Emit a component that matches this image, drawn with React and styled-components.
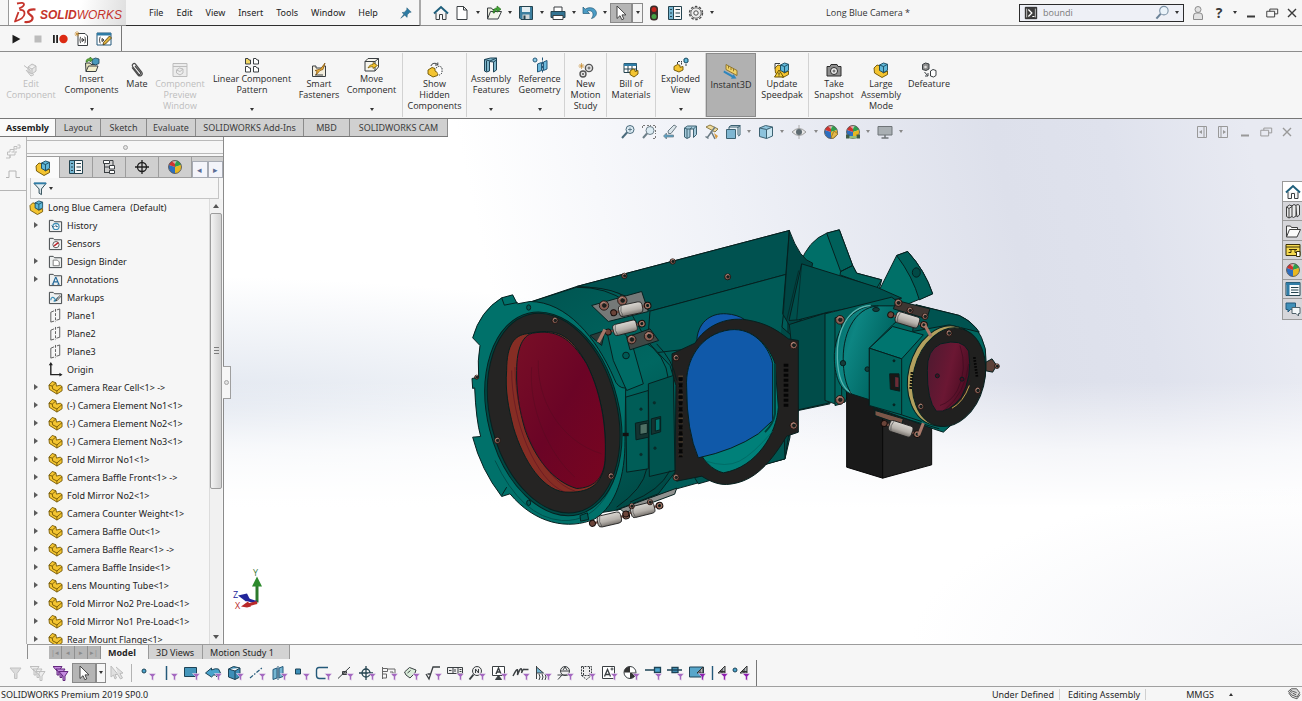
import React, { useState } from 'react';
import styled, { createGlobalStyle, css } from 'styled-components';

const GlobalStyle = createGlobalStyle`
  * {
    box-sizing: border-box;
  }

  body {
    margin: 0;
    background: #f6f6f6;
    color: #262626;
    font-family: "Open Sans", "Noto Sans", sans-serif;
    font-size: 9px;
    line-height: 11px;
  }

  button, input {
    margin: 0;
    padding: 0;
    border: none;
    background: none;
    color: inherit;
    font: inherit;
  }

  ul {
    margin: 0;
    padding: 0;
    list-style: none;
  }

  svg {
    display: block;
    flex: none;
  }
`;

const listFont = css`
  font-family: "Noto Sans", "Open Sans", sans-serif;
  font-size: 9px;
`;

/* ---------- icons ---------- */

const K = '#3a3f42';
const B = '#3b8db5';
const Y = '#f3c431';

const Part = () => (
  <g stroke="#6d5200" strokeWidth="0.9" strokeLinejoin="round">
    <path d="M1 5.5 4.5 1.5 8.5 3l.5 3.500 4-1L15 7v4.500L9.500 15 1.500 10z" fill={Y} />
    <path d="m1 5.500 3.500 1L8.500 3M4.500 6.500l.5 3 4.500 2.200L15 7M9.500 11.500V15" fill="none" />
  </g>
);

const Assembly = () => (
  <g strokeLinejoin="round">
    <path d="M1 6 4 3l3 .8V8l3.500 3L14.500 9V12.500L9 15.500 1.500 11z" fill={Y} stroke="#6d5200" strokeWidth="0.9" />
    <path d="m6.500 3 4-2 4 1.300v6L10.500 10.500 6.500 8.500z" fill="#5fb7d8" stroke="#17485e" strokeWidth="0.9" />
    <path d="m6.500 3 4 1.500 4-2.200M10.500 4.500v6" fill="none" stroke="#17485e" strokeWidth="0.9" />
  </g>
);

const Folder = () => (
  <path d="M1.500 14.500v-12h4l1.500 1.500h7.500v10.500z" fill="#eef0f0" stroke={K} />
);

const Ball = () => (
  <g>
    <path d="M8 8V1.500a6.500 6.500 0 0 1 6 4.500z" fill="#2f9e4c" />
    <path d="M8 8 14 6A6.500 6.500 0 0 1 8 14.500z" fill="#e8b820" />
    <path d="M8 8v6.500A6.500 6.500 0 0 1 2 6z" fill="#2d6fc0" />
    <path d="M8 8 2 6A6.500 6.500 0 0 1 8 1.500z" fill="#d1342f" />
    <path d="M5 2.500a6.500 6.500 0 0 1 5-.7L8 5z" fill="#f3f3f3" opacity="0.6" />
    <circle cx="8" cy="8" r="6.5" fill="none" stroke="#4b4b4b" strokeWidth="0.8" />
  </g>
);

const icons = {
  part: <Part />,
  assembly: <Assembly />,
  home: (
    <g>
      <path d="M3 8v6.500h3.500V9.500h3v5H13V8" fill="#f4f4f4" stroke={K} />
      <path d="M1 8.500 8 2l7 6.500" fill="none" stroke="#1f5f7c" strokeWidth="2" />
    </g>
  ),
  page: <path d="M3 1.500h6.500L13 5v9.500H3zM9.500 1.500V5H13" fill="#fff" stroke={K} />,
  open: (
    <g>
      <path d="M1.500 14V3h4l1 1.500h5V7" fill="#e8eadf" stroke={K} />
      <path d="m1.500 14 3-7.500h11L12 14z" fill="#f4f5ec" stroke={K} />
      <path d="M7 8c0-4 2-5 4-5V1l4 3.200-4 3V5C9.500 5 8.500 6 8.500 8z" fill="#44a538" stroke="#216518" strokeWidth="0.6" />
    </g>
  ),
  save: (
    <g>
      <path d="M1.500 1.500h13v13H3L1.500 13z" fill="#3d7f9f" stroke="#24434f" />
      <path d="M4 2h8v5H4z" fill="#e4eef2" />
      <path d="M4.500 9.500h7V14h-7z" fill="#d0d6d8" />
      <path d="M5.500 10.500h2V14h-2z" fill="#24434f" />
    </g>
  ),
  print: (
    <g>
      <path d="M4 7V2h8v5" fill="#fff" stroke={K} />
      <path d="M1 6.500h14v6H1z" fill="#337493" stroke="#24434f" />
      <path d="M3 10.500h10v4H3z" fill="#fff" stroke={K} />
    </g>
  ),
  undo: (
    <path d="M1 2v6.500h6.500L5.300 6.300C8 5 11 6 11 9.500c0 1.500-.5 2.500-1.500 4 4-1 5.500-4 4.700-6.700C13 2.800 7.500 1.300 3.200 4.200z" fill="#4b9cc5" stroke="#245a78" strokeWidth="0.7" />
  ),
  arrow: (
    <path d="M4 1v12.500l3-2.800 1.800 4 2-.8-1.800-4H13z" fill="#fff" stroke="#444" />
  ),
  light: (
    <g>
      <rect x="4" y="0.5" width="8" height="15" rx="3.5" fill="#3a2c28" />
      <circle cx="8" cy="4.500" r="2.500" fill="#c4261d" />
      <circle cx="8" cy="11.500" r="2.500" fill="#46a344" />
    </g>
  ),
  list: (
    <g>
      <path d="M1.500 1.500h13v13h-13z" fill="#f8f8f8" stroke="#24434f" />
      <path d="M2 2h4.500v12H2z" fill="#74b5d1" />
      <path d="M6.500 2v12M3 4.500h2M3 8h2M3 11.500h2M8.500 4.500h4.500M8.500 8h4.500M8.500 11.500h4.500" stroke="#24434f" />
    </g>
  ),
  gear: (
    <g fill="none" stroke="#4b4b4b">
      <circle cx="8" cy="8" r="6.500" strokeWidth="1.400" strokeDasharray="2.5 1.6" />
      <circle cx="8" cy="8" r="5.200" fill="#ececec" strokeWidth="0.8" />
      <circle cx="8" cy="8" r="2.200" fill="#fafafa" />
    </g>
  ),
  pin: (
    <g fill="#2d7ba3" stroke="#1d526e" strokeWidth="0.5">
      <path d="m9 2 5 5-2 .5-2.500 2.500-.2 3L3.500 7.500 6.300 7 8.800 4.300z" />
      <path d="M5.500 9.500 2 14l4.500-3.500z" />
    </g>
  ),
  play: <path d="M4 3v10l9-5z" fill="#1d1d1d" />,
  stop: <path d="M4 4h8v8H4z" fill="#bcbcbc" />,
  record: (
    <g>
      <path d="M1 4h1.800v8H1zM4.200 4H6v8H4.200z" fill="#222" />
      <circle cx="11.500" cy="8" r="4.200" fill="#dc2a12" />
    </g>
  ),
  macroNew: (
    <g>
      <path d="M4 2.500h7l2.500 2.500v9.500H4z" fill="#fff" stroke={K} />
      <path d="M7 6c-1.500 0 0 2.500-1.500 3C7 9.500 5.500 12 7 12M10.500 6c1.500 0 0 2.500 1.500 3-1.500.5 0 3-1.500 3M8 7.500v3L10.300 9z" fill="none" stroke="#222" strokeWidth="0.9" />
      <path d="M3 0v5.500M.5 3h5M1.200 1.200l3.600 3.600M4.800 1.200 1.200 4.800" stroke="#c78b2d" strokeWidth="0.7" />
    </g>
  ),
  macroEdit: (
    <g>
      <path d="M1 2h14v12H1z" fill="#fff" stroke="#24597a" />
      <path d="M1 2h14v2.500H1z" fill="#2e7ba5" />
      <path d="M4.500 6c-1.500 0 0 2.500-1.500 3 1.500.5 0 3 1.500 3M6 7.500v3L8 9z" fill="none" stroke="#222" strokeWidth="0.9" />
      <path d="m13.500 5 2 2-6 6-2.500.8.6-2.500z" fill="#e0b33c" stroke="#49350a" strokeWidth="0.8" />
    </g>
  ),
  editGrey: (
    <g fill="#e7e7e7" stroke="#bdbdbd">
      <path d="m5 5 4-3 4 2v5l-4 3-4-2zM5 5l4 2 4-3M9 7v5" />
      <path d="M1 3.500 7 8v3M3 8l5 6 3-1.500" fill="none" />
    </g>
  ),
  insert: (
    <g>
      <path d="M2 14.500 1.500 6H6l1 1.500h6" fill="#e9e6bf" stroke={K} />
      <path d="m2 14.500 2.500-5.500H14l-2 5.500z" fill="#f3efca" stroke={K} />
      <path d="m8 2.500 3.500-1.500 3.500 1v4.500L11.500 8 8 6.500z" fill="#4a98bb" stroke="#1d4356" strokeWidth="0.8" />
      <path d="M2 5c0-3 2-3.500 4-3.500V0l3 2.500L6 5V3.500C4.500 3.500 3.800 4 3.500 5z" fill="#63ad3c" stroke="#2d6b19" strokeWidth="0.6" />
    </g>
  ),
  clip: (
    <path d="m3 5.500 6 7.500c2 2.300 5.500-.2 3.700-2.800L6.500 2.200C5 .5 2.300 2.500 3.600 4.500l6 7.500c1 1.200 2.700 0 1.800-1.300L6 4" fill="none" stroke="#4a4a4a" strokeWidth="1.200" />
  ),
  previewGrey: (
    <g fill="#ececec" stroke="#bdbdbd">
      <path d="M1 1.500h14v13H1zM1 4.500h14" />
      <path d="m4.500 8 3-2 3.500 1v4l-3 2-3.500-2zM4.500 8 8 9.500 11 7" />
    </g>
  ),
  pattern: (
    <g fill="#fff" stroke={K}>
      <path d="M1.500 1.500H4l1 1.500h1.500v4h-5z" fill="#f2d764" />
      <path d="M9.500 1.500H12L13 3h1.500v4h-5zM1.500 9.500H4L5 11h1.500v4h-5zM9.500 9.500H12L13 11h1.500v4h-5z" />
    </g>
  ),
  fasteners: (
    <g>
      <path d="M1.500 4H5v2h7V4h2.500v10.500h-13z" fill="#f4efdf" stroke={K} />
      <path d="M4 8.500 9.500 7 14 1l-2 6.500-3 1-4 4.500 1-4z" fill="#edb23a" stroke="#7d4c06" strokeWidth="0.7" />
      <path d="M4 13h8" stroke={K} />
    </g>
  ),
  move: (
    <g>
      <path d="M1 4.500 4 1.500h10.500V10l-3.500 4H1z" fill="#f6f5ee" stroke={K} />
      <path d="M1 4.500h10l3.500-3M11 4.500V14" fill="none" stroke={K} />
      <path d="M4 11c1-2.500 3-3.500 5-3.500v-2l4.500 3L9 11.500V9.800C7.500 9.500 6 10 4 11z" fill={Y} stroke="#6d5200" strokeWidth="0.7" />
    </g>
  ),
  hidden: (
    <g>
      <path d="M1 8 5 5.500l3 1V9l3 2-.5 2.500L6 15l-5-3z" fill={Y} stroke="#6d5200" strokeWidth="0.9" />
      <path d="m9 6 3-2 3 1.500V11l-2.500 2L11 12" fill="#fff" stroke={K} strokeDasharray="1.5 1" />
      <path d="M4 4c.5-3 5-3.500 6.500-1.500M10.800.5V3H8" fill="none" stroke={K} />
    </g>
  ),
  features: (
    <g stroke="#1d4356">
      <path d="m1.500 2.500 6-1.500h6v12l-3 2V5l-4-.5V14l-3 1-2-1z" fill="#7fb6cb" />
      <path d="M1.500 2.500 7 4l6.500-3M10.500 5l3-2M3.500 4v10.500" fill="none" />
    </g>
  ),
  geometry: (
    <g>
      <circle cx="3" cy="3" r="2" fill="#8fcbe4" stroke="#24597a" />
      <path d="m5.500 7 4-1.500v8L5.500 15zM11.500 5 15 3.500V12l-3.500 1.500z" fill="#6db9dc" stroke="#24597a" />
      <path d="M10.500.5v15" stroke="#24597a" strokeDasharray="3 1" />
    </g>
  ),
  motion: (
    <g fill="#e9e9e9" stroke="#555">
      <circle cx="11" cy="6" r="3.600" strokeWidth="1.400" />
      <circle cx="11" cy="6" r="1" />
      <circle cx="5" cy="12" r="3" strokeWidth="1.400" />
      <circle cx="5" cy="12" r="0.7" />
      <path d="M3.500 1v6M.5 4h6M1.500 2l4 4M5.500 2l-4 4" stroke="#c78b2d" strokeWidth="0.7" />
    </g>
  ),
  bom: (
    <g>
      <path d="M1 1.500h12.500v9H1z" fill="#fff" stroke="#24434f" />
      <path d="M1 1.500h12.500V4H1z" fill="#2f7da7" />
      <path d="M1 7h12.500M5 4v6.500M9 4v6.500" stroke="#24434f" />
      <path d="m7 9 3-2 2 .8v1.700l3-1V12L11 15l-4-2.500z" fill={Y} stroke="#6d5200" strokeWidth="0.9" />
    </g>
  ),
  exploded: (
    <g>
      <path d="m1 9.500 3.500-2 2.500.8v2l3-.8V13L6 15l-5-2z" fill={Y} stroke="#6d5200" strokeWidth="0.9" />
      <path d="m11 2 2-1 2 1v3l-2 1-2-1z" fill="#5fb7d8" stroke="#17485e" />
      <path d="M13 7v3M8.500 5.500v2M4.500 7V4.500H9" fill="none" stroke={K} strokeDasharray="2 1" />
    </g>
  ),
  instant: (
    <g>
      <path d="m3 1.500 11 6v5L3 6.500z" fill="#f0d36a" stroke="#806519" strokeWidth="0.8" />
      <path d="M5.500 3v2.500M8 4.500V7M10.500 5.800v2.500" stroke="#806519" strokeWidth="0.8" />
      <path d="m1 7.500 9 5 .5-1.500 3 4.500-5.500.3.800-1.500-8.300-4.800z" fill="#2f86bd" />
    </g>
  ),
  speedpak: (
    <g>
      <Assembly />
      <path d="M1 1.500h5M1 1.500v5" stroke={K} fill="none" />
      <path d="m5 8 4.500 7h-9z" fill="#f7d23a" stroke="#6d5200" />
      <path d="M5 10.500v2.300M5 13.500v.8" stroke="#222" />
    </g>
  ),
  camera: (
    <g>
      <path d="M1 4.500h3l1-2h6l1 2h3V14H1z" fill="#8e8e8e" stroke="#2c2c2c" />
      <circle cx="8" cy="9" r="3.500" fill="#f1f1f1" stroke="#2c2c2c" />
      <circle cx="8" cy="9" r="1.500" fill="#777" />
    </g>
  ),
  defeature: (
    <g>
      <path d="m1.500 2.500 3-1.500L8 2v5L5 8.500l-3.500-1z" fill="#8d8d8d" stroke={K} />
      <circle cx="4.500" cy="5" r="1.300" fill="#ddd" />
      <path d="m9.500 9 2.500-1.500 3 1v5L12.500 15l-3-1z" fill="#fff" stroke={K} />
      <path d="m3.500 10 3 3.500M7 11v3H4" fill="none" stroke={K} />
    </g>
  ),
  zoomFit: (
    <g>
      <circle cx="10" cy="5.500" r="4" fill="#dcebf3" stroke="#4b6b7c" />
      <path d="M7 8.500 2 14" stroke="#4b6b7c" strokeWidth="2" />
      <path d="M8 5.500h4M10 3.500v4" stroke="#4b6b7c" strokeWidth="0.8" />
    </g>
  ),
  zoomArea: (
    <g>
      <path d="M1.500 4V1.500H4M12 1.500h2.500V4M14.500 12v2.500H12M6 1.500h4M14.500 6v4" fill="none" stroke="#777" strokeDasharray="2 1" />
      <circle cx="9" cy="6.500" r="4" fill="#dcebf3" stroke="#6d7f89" />
      <path d="m6 9.500-4 4.500" stroke="#6d7f89" strokeWidth="2" />
    </g>
  ),
  prevView: (
    <g stroke="#6b7b84" fill="#dbe5ea">
      <path d="m12 1 2.500 1.500L9 9.500H6.500L6 7z" />
      <path d="m1.500 12 3-3v2h7v2h-7v2z" fill="#5ba1c5" strokeWidth="0.7" />
    </g>
  ),
  section: (
    <g stroke="#3d6272">
      <path d="m1.500 4 3-2h9v8.500l-3 3V5H7v8l-3 1.500-2.500-1.500z" fill="#a4c9da" />
      <path d="M1.500 4 4 5h3l2-1.500M10.500 5l3-3M4 5v9" fill="none" />
    </g>
  ),
  dynView: (
    <g>
      <path d="m2 3 4-2 8 4-3 3z" fill="#f0dc9c" stroke="#8d7b45" />
      <path d="M3 14 11 3M7 7l4 8M1.500 12.500l3 2" stroke="#6b7b84" strokeWidth="1.500" />
      <path d="m10 9 4 3-2 3z" fill="#d99a3d" />
    </g>
  ),
  orient: (
    <g stroke="#3d6272">
      <path d="m4 3 2-1.500h9l-2 2M4 3h9v8M13 3.500l2-2V11l-2 1" fill="#e9f1f5" />
      <path d="M1.500 5.500h9v9h-9z" fill="#7fb6d1" />
      <path d="M4 5.500V3" />
    </g>
  ),
  cube: (
    <g stroke="#3d6272" strokeLinejoin="round">
      <path d="m1.500 4 6-2.500 7 1.500v9l-6 2.500-7-2z" fill="#8dc3dc" />
      <path d="m9 6 5-2.200v7.700L9 13.700z" fill="#c9e5f0" stroke="none" />
      <path d="m1.500 4 7 1.500 6-2.500M8.500 5.500v9" fill="none" />
    </g>
  ),
  eye: (
    <g>
      <path d="M1 8q7-7 14 0-7 7-14 0z" fill="#e6e6e6" stroke="#9b9b9b" />
      <circle cx="8" cy="8" r="3" fill="#5d6a70" />
      <path d="M8 1v3M8 12v3" stroke="#aaa" />
    </g>
  ),
  appearance: (
    <g>
      <Ball />
      <path d="m11 7 4 3-5 4.500-2-1z" fill="#e2b84c" stroke="#85662a" strokeWidth="0.7" />
    </g>
  ),
  scene: (
    <g>
      <Ball />
      <path d="M1 10.500h3.500v4H1zM11.500 10.500H15v4h-3.500z" fill="#3f5c48" />
      <path d="M4.500 12h7v2.500h-7z" fill="#97bf7a" />
    </g>
  ),
  monitor: (
    <g stroke="#6f7478">
      <path d="M1 2.500h14V11H1z" fill="#a9afb3" />
      <path d="M8 11v2.500M4.500 14h7" strokeWidth="1.500" />
    </g>
  ),
  ball: <Ball />,
  tree: (
    <g fill="#fff" stroke={K}>
      <path d="M3.500 2v12M3.500 8h5M3.500 13.500h5" fill="none" />
      <path d="M2.500 1.500h6v3h-6zM8.500 6.500h5V10h-5zM8.500 11.500h5v3h-5z" />
      <path d="M9 1.500h3V6" fill="none" />
    </g>
  ),
  target: (
    <g fill="none" stroke="#1f1f1f" strokeWidth="1.300">
      <circle cx="8" cy="8" r="4.500" />
      <path d="M8 1v14M1 8h14" />
    </g>
  ),
  history: (
    <g>
      <Folder />
      <circle cx="8.500" cy="9" r="3.300" fill="#fff" stroke={B} strokeWidth="1.200" />
      <path d="M8.500 7v2.200h2M4 8l1.500 2L7 8.500" fill="none" stroke="#24597a" />
    </g>
  ),
  sensors: (
    <g>
      <Folder />
      <circle cx="8.500" cy="9.200" r="3.300" fill="#fff" stroke="#555" />
      <path d="M6.500 10.500 11 7" stroke="#c0272d" strokeWidth="1.600" />
    </g>
  ),
  binder: (
    <g>
      <Folder />
      <path d="M5.500 6.500H10l2 2v4H5.500z" fill="#fff" stroke="#777" />
    </g>
  ),
  annotations: (
    <g>
      <Folder />
      <path d="m5 13 3-7h.6l3 7M6 10.500h4.500M4 13h2.500M10 13h2.500" fill="none" stroke="#24699a" strokeWidth="1.200" />
    </g>
  ),
  markups: (
    <g>
      <Folder />
      <path d="M3 11c0-3 2-4 4-2s-2 3 0 3 2-4 4-4" fill="none" stroke={B} strokeWidth="1.200" />
      <path d="m12.500 6 1 1-3.500 4-1.500.5.5-1.500z" fill="#fff" stroke="#333" strokeWidth="0.9" />
    </g>
  ),
  plane: (
    <g fill="none" stroke="#5a5a5a">
      <path d="M6.500 3 3 4.500V15l3.500-1M9.500 2l3-1v11L9 13" />
      <path d="M8 1v14" strokeDasharray="3 1.5" />
    </g>
  ),
  origin: (
    <g stroke="#222" fill="#222">
      <path d="M3 3v10.500h10" fill="none" strokeWidth="1.500" />
      <path d="M3 0 .8 3.500h4.400zM15.500 13.500l-3.300-2v4z" stroke="none" />
    </g>
  ),
  funnel: (
    <g>
      <path d="M1 2.500h13L9 8.500v6L6.500 13V8.500z" fill="#e4eef2" stroke="#24434f" />
      <path d="M1 1.500h13v2H1z" fill="#2f7da7" />
    </g>
  ),
  library: (
    <g fill="#e9e9e9" stroke="#3d3d3d">
      <path d="M10.500 2.500 13 1.500l1.500 1v9.500L12 14z" />
      <path d="m6 3.500 3-2 2 1V13l-2.500 1.500L6 13z" />
      <path d="m1.500 4 3-2L7 3v10.500L4 15l-2.500-1.500zM1.500 4 4 5.500V15M4 5.500 7 3.500" />
    </g>
  ),
  folder: (
    <g stroke="#3d3d3d" fill="#fafafa">
      <path d="M1.500 14V3h4l1 1.500h6V7" />
      <path d="m1.500 14 3-7.500h11L12 14z" />
    </g>
  ),
  palette: (
    <g>
      <path d="M1 2.500h14v11H1z" fill="#f5d94e" stroke="#3d3208" />
      <path d="M1 5h14M4 7.500h8M6 7.500v3H3.500M10 7.500v3h2.500" stroke="#3d3208" fill="none" />
      <path d="M11.500 9.500H15v5h-3.500z" fill="#fff" stroke="#3d3208" />
    </g>
  ),
  props: (
    <g>
      <path d="M1 1.500h14v13H1z" fill="#f6fafc" stroke="#24434f" />
      <path d="M1 1.500h14V4H1zM1.500 4h3v10.500h-3z" fill="#2f7da7" />
      <path d="M6 6.500h7.500M6 9h7.500M6 11.500h7.500" stroke="#24434f" />
    </g>
  ),
  forum: (
    <g>
      <path d="M1 2h9.500v6.500h-5L3 11V8.500H1z" fill="#3f8fb8" stroke="#24597a" />
      <path d="M7 6.500h8v6h-1.500V15L11 12.500H7z" fill="#f3f7f9" stroke="#50626b" />
    </g>
  ),
  tags: (
    <g fill="#dcdcdc" stroke="#4a4a4a">
      <path d="M1.500 5 5 2h6l3.500 4.500-3 5L5 9z" />
      <path d="M2 7l3.500 4.500 6 2L15 8.500" fill="none" />
      <circle cx="5" cy="5" r="1" fill="#fff" />
      <path d="m7 5 4 1.500M6.500 7l4 2" />
    </g>
  ),
  railA: (
    <path d="M1 14h4v-3H2.500V8H5V5.500h4V8H6.500M9 5.500v-3h3V5H9M12.500 1H15v3h-2M5 14v-3h5V8h2" fill="none" stroke="#bfbfbf" />
  ),
  railB: <path d="M1 11.500h3V5h7v6.500h4" fill="none" stroke="#b4b4b4" />,
  user: (
    <g fill="#e2e2e2" stroke="#8d8d8d">
      <circle cx="8" cy="4.500" r="3" />
      <path d="M3.500 14.500V11q0-3 2.500-3h4q2.500 0 2.500 3v3.500z" />
    </g>
  ),
  minimize: <path d="M4 10.500h8v2H4z" fill="currentColor" />,
  restore: (
    <g fill="none" stroke="currentColor" strokeWidth="1.100">
      <path d="M5.500 6V3.500h9V9H11" />
      <path d="M2 6h9v6.500H2z" />
    </g>
  ),
  close: <path d="m4 4 8 8M12 4l-8 8" stroke="currentColor" strokeWidth="1.400" />,
  dockLeft: (
    <g fill="none" stroke="currentColor">
      <path d="M3.500 2.500h9v11h-9zM10 2.500v11" />
      <path d="M8 6v4L5 8z" fill="currentColor" stroke="none" />
    </g>
  ),
  dockRight: (
    <g fill="none" stroke="currentColor">
      <path d="M3.500 2.500h9v11h-9zM6 2.500v11" />
      <path d="M8 6v4l3-2z" fill="currentColor" stroke="none" />
    </g>
  ),
  terminal: (
    <g>
      <path d="M1.500 1.500h13v13h-13z" fill="#3c3c3c" stroke="#1f1f1f" />
      <path d="M3 3v10M13 3v10" stroke="#ccc" />
      <path d="m5 4 4 4-4 4M9.500 12H12" fill="none" stroke="#fff" strokeWidth="1.400" />
    </g>
  ),
  search: (
    <g fill="none">
      <circle cx="9.500" cy="6" r="4.500" fill="#eaf3fa" stroke="#7d93a6" strokeWidth="1.200" />
      <path d="m6 9.500-4.500 5" stroke="#6a8298" strokeWidth="2.200" />
    </g>
  ),
  funnelGrey: <path d="M2 3h11L9 8.500v5H6.500v-5z" fill="#dcdcdc" stroke="#c2c2c2" />,
  funnelsGrey: (
    <g fill="#ededed" stroke="#bebebe">
      <path d="M0 1.500h9L6 6v4H4V6zM3 4h9L9 8.500v4H7v-4zM6 6.500h9L12 11v4.500h-2V11z" />
    </g>
  ),
  funnelsPurple: (
    <g fill="#c58be0" stroke="#64287e">
      <path d="M0 1.500h9L6 6v4H4V6z" />
      <path d="M3 4h9L9 8.500v4H7v-4z" />
      <path d="M6 6.500h9L12 11v4.500h-2V11z" />
    </g>
  ),
  selectGrey: (
    <g fill="#e0e0e0" stroke="#bdbdbd">
      <path d="M2 1v11l2.500-2L6 14l1.500-1L6 9.500h3z" />
      <path d="m7 2 7 6-3 .5 2.500 4.500-2 1L9 10" />
    </g>
  ),
};

const Icon = ({ name, size = 16 }) => (
  <svg width={size} height={size} viewBox="0 0 16 16" aria-hidden="true">
    {icons[name]}
  </svg>
);

// Selection filter glyphs, drawn on a 20x16 grid with the small funnel in the corner
const filterGlyphs = [
  ['Filter Vertices', <circle cx="6" cy="6" r="2" fill="#4aa3cc" stroke="#1d4356" />],
  ['Filter Edges', <path d="M6.500 1v14" stroke="#24597a" strokeWidth="1.500" />],
  ['Filter Faces', <path d="M2.500 2.500h12v9h-12z" fill="#4596bb" stroke="#1d4356" />],
  ['Filter Surface Bodies', <path d="m1.500 8 6-5v2q4-2 7-1l2 4-4 4v-2q-3-1-5 2z" fill="#4aa3cc" stroke="#1d4356" />],
  ['Filter Solid Bodies', <path d="m2.500 4 5-2.500L14 3v9l-5 2.500L2.500 12zM2.500 4 9 6l5-3M9 6v8.500" fill="#3d8fb8" stroke="#1d4356" />],
  ['Filter Axes', <path d="M2 13 15 2" stroke="#24597a" strokeWidth="1.200" strokeDasharray="4 1.5 1.5 1.5" />],
  ['Filter Planes', <path d="m3 4.500 4-1.500v10l-4 1.500zM9 3l4-1.500v10L9 13zM8 1v14" fill="#74b5d1" stroke="#24597a" />],
  ['Filter Sketch Points', <path d="M3.500 4h5v5h-5z" fill="#3d8fb8" stroke="#1d4356" />],
  ['Filter Sketch Segments', <path d="M14 2.500H5q-2.500 0-2.500 3v5q0 3 3 3h6" fill="none" stroke="#24597a" strokeWidth="1.400" />],
  ['Filter Midpoints', <path d="M2 13.500 14 2M6.500 6.500h4v3h-4z" fill="#888" stroke={K} />],
  ['Filter Center Marks', <g fill="none" stroke="#24434f" strokeWidth="1.300"><circle cx="8" cy="8" r="4" /><path d="M8 1v14M1 8h14" /></g>],
  ['Filter Centerlines', <path d="M2.500 2v12M2.500 3.500h5v3h-5M2.500 9h4v4h-4M8 4h7v7M10 7h3v4" fill="none" stroke="#666" />],
  ['Filter Dimensions', <path d="m2.500 7 5-4.500L14 5l-1 3-5 5-4-3zM5.500 8l3-2.500" fill="#d9ecd9" stroke={K} />],
  ['Filter Surface Finish', <path d="m2 9 3 5L9 2h7M3.500 9H7" fill="none" stroke={K} strokeWidth="1.300" />],
  ['Filter Geometric Tolerances', <path d="M1.500 2.500h15v6h-15zM7 2.500v6M12 2.500v6M3 5.500h2.500M9 4v3M13.500 4.500h2M13.500 6.500h2" fill="#eee" stroke={K} />],
  ['Filter Notes', <g fill="none" stroke={K}><circle cx="9" cy="6" r="4.500" fill="#eee" /><path d="m5.500 9.500-4 5" strokeWidth="2" /><path d="M7.500 8V4l3 4V4" /></g>],
  ['Filter Datum Features', <g fill="none" stroke={K}><path d="M2.500 1.500h12v9h-12z" fill="#fff" /><path d="m6 9 2.500-6L11 9M7 7h3" strokeWidth="1.400" /><path d="m8.500 10.500-3 4h6z" fill={K} /></g>],
  ['Filter Weld Symbols', <path d="M1 11q4-8 4.500-6t0 5q3-8 4-6t0 4q2-5 3-3.500h4" fill="none" stroke={K} strokeWidth="1.400" />],
  ['Filter Weld Beads', <g fill="none" stroke={K}><path d="M2.500 1v13M2.500 2l7 6h-7" fill="#74b5d1" /><path d="M5 9q2 3 0 6M8 9q2 3 0 6M11 9q2 3 0 6" /></g>],
  ['Filter Datum Targets', <g fill="none" stroke={K}><circle cx="9" cy="6" r="4.500" fill="#eee" /><path d="M4.500 6h9M1.500 10h12M6 10l-4 4.500M7 5l2-3 2 3" /></g>],
  ['Filter Cosmetic Threads', <path d="M3.500 1.500h10v9l-5 4-5-4zM5.500 2v8M11.500 2v8M3.500 10.500h10" fill="#eee" stroke={K} strokeDasharray="2 1" />],
  ['Filter Blocks', <g fill="none" stroke={K}><path d="M2.500 1.500h12v12h-12z" fill="#fff" /><path d="m4.500 11.500 3-7 3 7M5.500 9.500h4" strokeWidth="1.300" /><circle cx="12" cy="4" r="1" /></g>],
  ['Filter Dowel Pins', <g><circle cx="8" cy="7.500" r="6" fill="#fff" stroke={K} /><path d="M8 1.500v6H2a6 6 0 0 1 6-6zM8 7.500h6a6 6 0 0 1-6 6z" fill="#333" /></g>],
  ['Filter Connection Points', <path d="M1 5h9M10.500 2.500h6v5h-6z" fill="#4aa3cc" stroke="#1d4356" strokeWidth="1.300" />],
  ['Filter Routing Points', <path d="M1 5h15M6 2.500h6v5H6z" fill="#4aa3cc" stroke="#1d4356" strokeWidth="1.300" />],
  ['Filter Mesh Facets', <g stroke="#1d4356"><path d="M1.500 2h14v10h-14z" fill="#58a6ca" /><path d="m9 8 6-6v6zM12 5v3" fill="#aeb6ba" stroke="#333" /></g>, true],
  ['Filter Mesh Edges', <g fill="none"><path d="M2.500 1v14" stroke="#24597a" strokeWidth="1.400" /><path d="m8 8 7-7v7zM12 4v4M10 6.500h5" fill="#aeb6ba" stroke="#333" /></g>, true],
  ['Filter Mesh Vertices', <g><circle cx="3" cy="5" r="2" fill="#4aa3cc" stroke="#1d4356" /><path d="m8 8 7-7v7zM12 4v4M10 6.500h5" fill="#aeb6ba" stroke="#333" /></g>, true],
];

/* ---------- shared controls ---------- */

const Caret = styled.span`
  width: 0;
  height: 0;
  flex: none;
  border: 2px solid transparent;
  border-top: 3px solid ${(p) => p.$color || '#333'};
  border-bottom: none;
`;

const ToolButton = styled.button`
  display: flex;
  align-items: center;
  justify-content: center;
  flex: none;
  width: ${(p) => p.$w || 22}px;
  height: 20px;
  color: ${(p) => p.$color || '#3a3a3a'};
  ${(p) =>
    p.$boxed &&
    css`
      border: 1px solid #8a8a8a;
      background: ${p.$boxed};
    `}
`;

/* ---------- title bar ---------- */

const Shell = styled.div`
  display: flex;
  flex-direction: column;
  height: 100vh;
  overflow: hidden;
`;

const TitleBar = styled.header`
  display: flex;
  align-items: stretch;
  flex: none;
  height: 26px;
  padding-left: 8px;
  border-bottom: 1px solid #8d8d8d;
`;

const Brand = styled.div`
  display: flex;
  align-items: center;
  gap: 3px;
  width: 118px;
  padding-left: 4px;
  border-left: 1px solid #9a9a9a;
  background: linear-gradient(100deg, #fff 60%, #dedede);
`;

const BrandName = styled.span`
  padding-top: 5px;
  color: #c5332b;
  font-family: "Liberation Sans", Arial, sans-serif;
  font-size: 12px;
  font-style: italic;
  line-height: 14px;

  b {
    font-weight: 700;
  }
`;

const MenuBar = styled.nav`
  display: flex;
  align-items: center;
  gap: 13px;
  height: 26px;
  width: 295px;
  padding-left: 23px;
  border-bottom: 1px solid #2f2f2f;
  border-right: 2px solid #a9a9a9;
`;

const MenuItem = styled.button`
  color: #222;
  ${listFont}
`;

const PinButton = styled(ToolButton)`
  margin-left: auto;
  margin-right: 3px;
`;

const QuickTools = styled.div`
  display: flex;
  align-items: center;
  padding-left: 9px;
`;

const DocTitle = styled.div`
  flex: 1;
  align-self: center;
  color: #333;
  text-align: center;
  white-space: nowrap;
`;

const SearchBox = styled.label`
  display: flex;
  align-items: center;
  align-self: center;
  gap: 5px;
  width: 165px;
  height: 18px;
  padding: 0 4px;
  border: 1px solid #2c2c2c;
  background: #eef0f6;

  input {
    flex: 1;
    min-width: 0;
    color: #7a7a7a;
    outline: none;
  }
`;

const WindowTools = styled.div`
  display: flex;
  align-items: center;
  margin-left: 3px;
`;

const HelpMark = styled.span`
  font-size: 14px;
  font-weight: 700;
`;

const MacroBar = styled.div`
  flex: none;
  height: 26px;
  border-bottom: 1px solid #8d8d8d;
`;

const MacroTools = styled.div`
  display: flex;
  align-items: center;
  width: 122px;
  height: 25px;
  padding-left: 5px;
  border-right: 1px solid #777;
`;

/* ---------- ribbon ---------- */

const Ribbon = styled.div`
  display: flex;
  flex: none;
  height: 67px;
  padding: 1px 0;
  border-bottom: 1px solid #777;
`;

const RibbonButton = styled.button`
  display: flex;
  flex-direction: column;
  align-items: center;
  flex: none;
  width: ${(p) => p.$w}px;
  padding: ${(p) => (p.$menu ? 4 : 9)}px 0 6px;
  border-right: ${(p) => (p.$sep ? '1px solid #d2d2d2' : 'none')};
  color: #2a2a2a;
  line-height: 11px;
  text-align: center;
  white-space: pre;

  &:disabled {
    color: #bdbdbd;
  }

  ${(p) =>
    p.$active &&
    css`
      border: 1px solid #8b8b8b;
      background: #b1b1b1;
    `}

  ${Caret} {
    margin-top: auto;
  }
`;

const ribbon = [
  { icon: 'editGrey', text: 'Edit\nComponent', w: 62, disabled: true },
  { icon: 'insert', text: 'Insert\nComponents', w: 59, menu: true },
  { icon: 'clip', text: 'Mate', w: 32 },
  { icon: 'previewGrey', text: 'Component\nPreview\nWindow', w: 54, disabled: true },
  { icon: 'pattern', text: 'Linear Component\nPattern', w: 90, menu: true },
  { icon: 'fasteners', text: 'Smart\nFasteners', w: 44 },
  { icon: 'move', text: 'Move\nComponent', w: 62, menu: true, sep: true },
  { icon: 'hidden', text: 'Show\nHidden\nComponents', w: 64, sep: true },
  { icon: 'features', text: 'Assembly\nFeatures', w: 48, menu: true },
  { icon: 'geometry', text: 'Reference\nGeometry', w: 50, menu: true, sep: true },
  { icon: 'motion', text: 'New\nMotion\nStudy', w: 42, sep: true },
  { icon: 'bom', text: 'Bill of\nMaterials', w: 49, sep: true },
  { icon: 'exploded', text: 'Exploded\nView', w: 50, menu: true, sep: true },
  { icon: 'instant', text: 'Instant3D', w: 50, active: true },
  { icon: 'speedpak', text: 'Update\nSpeedpak', w: 53, sep: true },
  { icon: 'camera', text: 'Take\nSnapshot', w: 50 },
  { icon: 'assembly', text: 'Large\nAssembly\nMode', w: 44 },
  { icon: 'defeature', text: 'Defeature', w: 52 },
];

/* ---------- workspace ---------- */

const Workspace = styled.main`
  display: flex;
  flex-direction: column;
  flex: 1;
  min-height: 0;
  background:
    radial-gradient(ellipse 30% 30% at 100% 100%, #f1f2f6, rgba(255, 255, 255, 0)),
    linear-gradient(to bottom, rgba(255, 255, 255, 0) 50%, rgba(255, 255, 255, 0.7) 63%, #fff 74%),
    radial-gradient(ellipse 50% 26% at 14% 56%, #dee4ee, rgba(255, 255, 255, 0)),
    linear-gradient(78deg, #fff 40%, #eff1f7 58%, #dde0eb 78%, #dfe2ed 86%, #e8eaf2 96%);
`;

const TopRow = styled.div`
  display: flex;
  flex: none;
  height: 18px;
`;

const Tabs = styled.div`
  display: flex;
  flex: none;
  border-bottom: 1px solid #777;
`;

const Tab = styled.button`
  width: ${(p) => p.$w}px;
  border-right: 1px solid #8b8b8b;
  background: ${(p) => (p.$active ? '#fafafa' : '#d0d0d0')};
  color: ${(p) => (p.$active ? '#222' : '#3c3c3c')};
  ${listFont}
  font-weight: ${(p) => (p.$active ? 700 : 400)};
  white-space: nowrap;
`;

const HudTools = styled.div`
  display: flex;
  align-items: center;
  padding: 7px 0 0 169px;
`;

const DocControls = styled.div`
  display: flex;
  align-items: center;
  margin-left: auto;
  padding: 7px 4px 0 0;
`;

const Body = styled.div`
  display: flex;
  flex: 1;
  min-height: 0;
`;

const Rail = styled.div`
  width: 27px;
  flex: none;
  background: #f6f6f6;
  border-right: 1px solid #b5b5b5;
`;

const RailTools = styled.div`
  display: flex;
  flex-direction: column;
  align-items: center;
  gap: 2px;
  height: 54px;
  padding-top: 5px;
  border-bottom: 1px solid #b5b5b5;
`;

const Panel = styled.aside`
  position: relative;
  display: flex;
  flex-direction: column;
  flex: none;
  width: 197px;
  background: #f6f6f6;
  border-right: 1px solid #8b8b8b;
`;

const PanelGrip = styled.div`
  display: flex;
  align-items: center;
  justify-content: center;
  flex: none;
  height: 14px;
  margin-top: 3px;
  border-top: 1px solid #b9b9b9;
  border-bottom: 1px solid #b9b9b9;
`;

const Dot = styled.span`
  width: 5px;
  height: 5px;
  border: 1px solid #a5a5a5;
  border-radius: 50%;
  background: #e2e2e2;
`;

const PanelTabs = styled.div`
  display: flex;
  flex: none;
  height: 22px;
  margin-top: 2px;
`;

const PanelTab = styled.button`
  display: flex;
  align-items: center;
  justify-content: center;
  width: 33px;
  border: solid #9d9d9d;
  border-width: 1px 1px ${(p) => (p.$active ? 0 : 1)}px 0;
  background: ${(p) => (p.$active ? '#fbfbfb' : '#cfcfcf')};
`;

const PanelArrows = styled.div`
  display: flex;
  flex: 1;
  padding-top: 4px;
  border-top: 1px solid #9d9d9d;
  background: #cfcfcf;
`;

const PanelArrow = styled.button`
  flex: 1;
  border: 1px solid #a7abb4;
  background: #f3f4fa;
  color: #5a6d96;
`;

const FilterRow = styled.label`
  display: flex;
  align-items: center;
  gap: 1px;
  flex: none;
  height: 21px;
  margin: 0 4px 0 3px;
  padding-left: 2px;
  border: 1px solid #c5c5c5;
  border-top: none;

  input {
    flex: 1;
    min-width: 0;
    outline: none;
  }
`;

const TreeArea = styled.div`
  display: flex;
  flex: 1;
  min-height: 0;
  overflow: hidden;
`;

const Tree = styled.ul`
  flex: 1;
  min-width: 0;
  margin-top: -1px;
`;

const TreeItem = styled.li`
  display: flex;
  align-items: center;
  gap: 4px;
  height: 18px;
  padding-left: ${(p) => (p.$root ? 2 : 7)}px;
  color: #222;
  ${listFont}
  white-space: pre;
`;

const Expander = styled.span`
  width: 10px;
  flex: none;

  &::before {
    content: '';
    display: ${(p) => (p.$show ? 'block' : 'none')};
    width: 0;
    height: 0;
    border: 3px solid transparent;
    border-left: 4px solid #5c5c5c;
    border-right: none;
  }
`;

const ScrollTrack = styled.div`
  display: flex;
  flex-direction: column;
  align-items: center;
  flex: none;
  width: 13px;
  margin-right: 1px;
  border-left: 1px solid #dcdcdc;
  background: #f1f1f1;
`;

const ScrollArrow = styled.span`
  width: 0;
  height: 0;
  margin: 5px 0;
  border: 3px solid transparent;
  ${(p) => (p.$up ? 'border-bottom: 4px solid #555; border-top: none;' : 'border-top: 4px solid #555; border-bottom: none;')}
`;

const ScrollThumb = styled.div`
  display: flex;
  align-items: center;
  justify-content: center;
  width: 12px;
  height: 62%;
  margin-bottom: auto;
  border: 1px solid #9c9c9c;
  border-radius: 2px;
  background: linear-gradient(to right, #f3f3f3, #d2d2d2);
`;

const ThumbGrip = styled.span`
  width: 5px;
  height: 7px;
  background: repeating-linear-gradient(#7d7d7d 0 1px, transparent 1px 3px);
`;

const PanelHandle = styled.button`
  position: absolute;
  top: 229px;
  left: 100%;
  display: flex;
  align-items: center;
  justify-content: center;
  width: 8px;
  height: 33px;
  border: 1px solid #9f9f9f;
  border-left: none;
  background: #f6f6f6;
`;

const Canvas = styled.section`
  position: relative;
  flex: 1;
  min-width: 0;

  > svg {
    width: 100%;
    height: 100%;
  }
`;

const TaskPane = styled.div`
  position: absolute;
  top: 44px;
  right: 0;
  display: flex;
  flex-direction: column;
  border: 1px solid #999;
  border-right: none;
`;

const TaskTab = styled.button`
  display: flex;
  align-items: center;
  justify-content: center;
  width: 19px;
  height: 19px;
  border-bottom: 1px solid #999;
  background: ${(p) => (p.$active ? '#fff' : '#d6d6da')};

  &:nth-child(odd) {
    height: 20px;
  }

  &:last-child {
    border-bottom: none;
  }
`;

/* ---------- bottom bars ---------- */

const ViewTabs = styled.div`
  display: flex;
  flex: none;
  height: 15px;
  border-top: 1px solid #9c9c9c;
  margin-left: 27px;
  padding-left: 21px;
  border-left: 1px solid #8f8f8f;
`;

const ViewNav = styled.button`
  width: 13px;
  height: 13px;
  margin-top: 1px;
  border-right: 1px solid #8f8f8f;
  background: #b5b5b5;
  color: #8a8a8a;
  font-size: 7px;
  line-height: 11px;
`;

const ViewTab = styled.button`
  width: ${(p) => p.$w}px;
  padding-left: 7px;
  border-right: 1px solid #9a9a9a;
  background: ${(p) => (p.$active ? '#f6f6f6' : '#d3d3d3')};
  ${listFont}
  font-weight: ${(p) => (p.$active ? 700 : 400)};
  text-align: left;
  white-space: nowrap;
`;

const FilterBar = styled.div`
  display: flex;
  align-items: center;
  flex: none;
  height: 28px;
  padding-left: 5px;
  border-bottom: 1px solid #a0a0a0;
`;

const Divider = styled.span`
  width: 1px;
  height: ${(p) => (p.$tall ? 26 : 18)}px;
  margin: 0 5px 0 3px;
  background: ${(p) => (p.$tall ? '#777' : '#b3b3b3')};
`;

const StatusBar = styled.footer`
  display: flex;
  align-items: center;
  flex: none;
  height: 14px;
  padding: 0 1px;
  ${listFont}
  white-space: nowrap;
`;

const StatusText = styled.span`
  flex: 1;
`;

const StatusCell = styled.span`
  padding: 0 5px 0 8px;
  border-right: 1px solid #d0d0d0;
`;

const Units = styled.span`
  display: flex;
  align-items: center;
  gap: 15px;
  padding: 0 54px 0 40px;

  ${Caret} {
    transform: rotate(180deg);
  }
`;

/* ---------- model drawing ---------- */

const Screw = ({ x, y, r = 9 }) => (
  <g>
    <circle cx={x} cy={y} r={r} fill="#8c5f54" stroke="#180e0c" strokeWidth="2.5" />
    <circle cx={x + 1} cy={y} r={r / 2.6} fill="#2a1a17" />
    <path d={`M${x - r + 3} ${y - 3}q${r - 4} -${r - 2} ${r + 1} -3`} fill="none" stroke="#c9a497" strokeWidth="2" />
  </g>
);

const Spring = ({ x, y, angle }) => (
  <g transform={`translate(${x} ${y}) rotate(${angle})`}>
    <path d="M-54 0h108" stroke="#7c5348" strokeWidth="7" />
    <rect x="-36" y="-17" width="72" height="34" rx="10" fill="url(#steel)" stroke="#1d1d1d" strokeWidth="2.5" />
    <path d="M-26 -16q-8 16 0 32" fill="none" stroke="#555" strokeWidth="2" />
    <circle cx="-52" cy="0" r="9" fill="#6b4439" stroke="#160d0b" strokeWidth="3" />
    <circle cx="52" cy="0" r="10" fill="#a37464" stroke="#160d0b" strokeWidth="3" />
    <circle cx="52" cy="0" r="3" fill="#1c1210" />
  </g>
);

const Model = () => (
  <svg viewBox="224 137 1078 506" role="img" aria-label="Long Blue Camera assembly">
    <defs>
      <linearGradient id="steel" x1="0" y1="0" x2="0" y2="1">
        <stop offset="0" stopColor="#d9d6d1" />
        <stop offset="0.6" stopColor="#b5b0aa" />
        <stop offset="1" stopColor="#77726d" />
      </linearGradient>
      <linearGradient id="tube" x1="0" y1="0.2" x2="1" y2="0.7">
        <stop offset="0" stopColor="#006b68" />
        <stop offset="0.25" stopColor="#0d8582" />
        <stop offset="0.7" stopColor="#006662" />
        <stop offset="1" stopColor="#005754" />
      </linearGradient>
      <linearGradient id="shell" x1="0.2" y1="0" x2="0.6" y2="1">
        <stop offset="0" stopColor="#005652" />
        <stop offset="0.5" stopColor="#006761" />
        <stop offset="1" stopColor="#004a46" />
      </linearGradient>
      <linearGradient id="glass" x1="0" y1="0" x2="1" y2="1">
        <stop offset="0" stopColor="#780f26" />
        <stop offset="0.5" stopColor="#6b0426" />
        <stop offset="1" stopColor="#780520" />
      </linearGradient>
      <linearGradient id="smallGlass" x1="0" y1="0" x2="1" y2="0.4">
        <stop offset="0" stopColor="#4c1a30" />
        <stop offset="0.6" stopColor="#6b1733" />
        <stop offset="1" stopColor="#4f0d24" />
      </linearGradient>
    </defs>

    {/* drawn at three times the screen size, origin at 460,220 */}
    <g transform="translate(460 220) scale(0.33333)" stroke="#06201f" strokeWidth="3" strokeLinejoin="round">
      {/* rear fins */}
      <path d="M1020 130q25-70 80-92l38-10 40 107 12 23 75 20-10 40-120-10z" fill="#006f68" />
      <path d="m1100 38 38-10 40 107-36 18zM1142 153l36-18 12 23 75 20-15 25-110-40z" fill="#00605a" />
      <path d="m1260 205 50-100 33-12q52 57 75 127l-78 32-50-5z" fill="#007068" />
      <path d="m1310 105 33-12q52 57 75 127l-40 18q-20-70-68-133z" fill="#005e58" />
      <ellipse cx="1369" cy="156" rx="12" ry="14" fill="#004a46" />

      {/* main body */}
      <path d="M210 245 350 198 988 30l2 620-15 65-325 90-180 65z" fill="#005d59" />
      <path d="m960 250 150 20v280l-95 20-60-30z" fill="#004f4b" />
      <path d="M350 198 988 30l-4 130-264 72-150 40q-80-70-220-74z" fill="#005250" />
      <path d="m570 272 414-112v190L560 400z" fill="#005b57" />
      <path d="m984 160-18 160 40 35 9 215-30 80-10 65-60 15" fill="#004a47" />
      <path d="M715 790 975 715l-2-60-100 90-170 25z" fill="#005753" />

      {/* bracket and neck */}
      <path d="m988 30-20 250 20 34 35-14 35-172q-38-10-70-98z" fill="#004543" />
      <path d="m1025 130 225 70 75 33-220 42-90 23-28 2z" fill="#004f4c" />
      <path d="m1025 130-15 168M988 30l-18 250M1016 150l-36 150" fill="none" strokeWidth="2" />
      <path d="m988 312 117-37v273l-90 20z" fill="#004c49" />
      <path d="m1095 280 200-50 40 30-120 150-60 135-30 5-30-10z" fill="#00605b" />
      <path d="m1125 292 20-4v262l-20 5z" fill="#00655f" />

      {/* counterweight */}
      <path d="m1160 500 108 55v218l-108-33z" fill="#191919" stroke="#090909" />
      <path d="m1268 555 147 60v118l-147 40z" fill="#222" stroke="#090909" />

      {/* rear tube */}
      <path d="M1330 256h-80c-70-5-130 70-127 160 2 60 22 96 50 104l157 50z" fill="url(#tube)" />
      <path d="M1232 255c-70 5-103 78-100 158 2 56 18 92 42 104" fill="none" stroke="#59b5b0" strokeWidth="4" />
      <path d="M1255 256c-75 5-110 92-105 172 2 46 12 75 25 92" fill="none" />
      <circle cx="1149" cy="428" r="8" fill="#163c3a" />
      <circle cx="1222" cy="446" r="7" fill="#163c3a" />
      <ellipse cx="1248" cy="267" rx="10" ry="6" fill="#163c3a" />

      {/* rear lens cell */}
      <path d="m1228 383 70-70 70-60 130 32q60 25 78 100 12 95-32 165l-94 85-30-10-192-70z" fill="#00655f" />
      <path d="m1228 383 70-65 92 25-65 72z" fill="#00756f" />
      <path d="m1228 383 97 32v168l-97-28z" fill="#00635c" />
      <path d="m1368 253 130 32q40 20 60 50l-90-22-110 20z" fill="#005350" />
      <path d="m1238 565 200 60M1325 583l60 20" fill="none" />
      <path d="M1289 460h28l2 52-28-6z" fill="#1c1715" />
      <path d="m1304 468 13 2v32l-13-2z" fill="#6b2c36" />
      <circle cx="1302" cy="421" r="3" fill="#0b2e2c" />
      <circle cx="1302" cy="553" r="3" fill="#0b2e2c" />
      <ellipse cx="1455" cy="466" rx="110" ry="152" transform="rotate(14 1455 466)" fill="#b3a05e" />
      <ellipse cx="1467" cy="470" rx="107" ry="150" transform="rotate(14 1467 470)" fill="#20201f" />
      <path d="M1402 450q-2-62 40-80 65-18 84 22 12 75-22 138-38 48-75 42-28-32-27-122z" fill="url(#smallGlass)" />
      <path d="M1500 375q24 70-8 135-20 35-52 45M1526 430q-10 90-74 140M1530 480q-25 75-60 88" fill="none" stroke="#3c0a1e" strokeWidth="2" />
      <path d="M1528 495q-18 50-52 68" fill="none" stroke="#bda54e" strokeWidth="3" />
      <circle cx="1432" cy="466" r="6" fill="#4c0a22" />
      <circle cx="1506" cy="476" r="6" fill="#4c0a22" />
      <path d="m1543 410 8 60M1352 505l4-50" stroke="#050505" strokeWidth="8" strokeDasharray="5 4" />
      <path d="m1578 425 18-10 14 20-12 20-20-4z" fill="#5b4038" />
      <Screw x={1611} y={437} r={7} />
      <Screw x={1467} y={338} />
      <Screw x={1382} y={558} />
      <Screw x={1553} y={510} />

      <path d="m1310 240 100 25-10 30-100-30z" fill="#3f3632" />
      <Screw x={1315} y={247} r={11} />
      <Screw x={1350} y={270} r={9} />
      <Screw x={1395} y={288} r={9} />
      <Spring x={1342} y={298} angle={17} />
      <path d="m1395 315 18 32" stroke="#a8796a" strokeWidth="9" />
      <path d="m1245 570 85 25-5 18-80-28z" fill="#7b5648" />
      <Spring x={1322} y={625} angle={18} />
      <path d="m1390 608-14 36" stroke="#a8796a" strokeWidth="9" />
      <Screw x={1140} y={298} r={13} />
      <Screw x={1140} y={538} r={13} />

      {/* upper mirror seen through the body */}
      <path d="M710 368c0-60 40-92 90-88 40 3 70 20 90 60l-100 50z" fill="#1058ab" />

      {/* window frame */}
      <path d="m636 400 69-32c30-50 90-80 155-70 60 10 90 30 125 57l30 5v275l-35 12c-60 100-110 140-180 145-30 0-50-10-75-25l-75 15-6-15z" fill="#222120" />
      <path d="M680 500c-5-80 40-160 130-172 70-8 120 52 135 102l10 130c-5 80-65 180-165 197-70-17-110-117-110-257z" fill="#008079" />
      <path d="M680 500c-5-80 40-160 130-172 70-8 118 52 128 102v170l-43 40q-75 50-180 72-35-80-35-212z" fill="#1059a9" />
      <path d="M945 430v150q-5 30-30 55" fill="none" stroke="#003e3b" strokeWidth="6" />
      <path d="M738 722q60 20 100 0t100-90" fill="none" stroke="#00625d" strokeWidth="2" />
      <path d="M978 430v130" stroke="#060606" strokeWidth="14" strokeDasharray="9 6" />
      <path d="M662 465v250" stroke="#4a3d2c" strokeWidth="14" strokeDasharray="5 9" />
      <path d="M662 470v240" stroke="#060606" strokeWidth="12" strokeDasharray="12 6" />
      <Screw x={648} y={412} />
      <Screw x={648} y={771} />
      <Screw x={1001} y={374} r={11} />
      <Screw x={1001} y={615} r={11} />

      {/* front cylinder shell */}
      <path d="M210 245 350 200q80-2 130 20l80 140 70 75 18 60-3 260-50 65-130 50-100 15z" fill="url(#shell)" />
      <path d="M350 200q90 0 150 45M548 360q70 40 78 120M590 370q50 50 60 110" fill="none" />
      <path d="M440 330h45l30 35 35 125-50 20-40-90z" fill="#006b65" />
      <path d="m497 530 68-20v235l-65 10z" fill="#005d57" />
      <path d="m565 490 75-25 5 285-77 18z" fill="#00544f" />
      <path d="m526 608 40-8v50l-38 8zM574 595l28-7v46l-28 8z" fill="#143331" />
      <path d="m540 612 22-4v30l-22 4z" fill="#4f6f64" />
      <path d="m586 597 14-3v34l-14 4z" fill="#00746e" />
      <g fill="#0b2e2c" strokeWidth="1">
        <circle cx="543" cy="566" r="4" />
        <circle cx="583" cy="547" r="4" />
        <circle cx="543" cy="702" r="4" />
        <circle cx="585" cy="683" r="4" />
      </g>
      <path d="M560 745q-10 60-90 115M630 750q-30 60-120 95" fill="none" />

      {/* front ring */}
      <path d="M210 243c110 0 200 110 252 230q10 30 35 30l-2 160c0 100-25 190-90 232-80 35-180 15-255-75l-25 8q-62-80-87-178l24-2q-14-50-18-146l-6 2-2-30 20-4q-4-50 4-95l-22-23q22-80 87-120l33-9 14 27z" fill="#00716a" />
      <path d="M470 545q30 170-25 270-50 90-140 85-120-10-200-180" fill="none" stroke="#004f4b" />
      <path d="m125 232 8 22 40-8M125 825l15-25" fill="none" />
      <ellipse cx="280" cy="580" rx="197" ry="311" transform="rotate(-14 280 580)" fill="#004844" />
      <ellipse cx="281" cy="578" rx="190" ry="305" transform="rotate(-14 281 578)" fill="#252423" />
      <path d="M140 450c0-80 25-106 60-110 90-20 130 0 180 90 50 100 60 210 55 290-5 70-45 95-105 95-80 5-140-95-170-195-15-60-25-110-20-170z" fill="#862d24" />
      <path d="M170 450c0-70 20-106 48-112 70-12 112 12 162 92 50 100 60 210 55 290-5 56-35 82-85 84-70-20-124-90-154-174-18-60-28-120-26-180z" fill="url(#glass)" />
      <path d="M155 450c0 150 70 330 160 365M165 440c0 160 80 340 180 372M215 440c-10 120 50 260 130 330M235 420c-5 110 60 240 190 280" fill="none" stroke="#570a20" strokeWidth="1.5" />
      <Screw x={285} y={300} />
      <Screw x={112} y={660} />
      <Screw x={453} y={767} />
      <Screw x={50} y={470} r={6} />
      <ellipse cx="206" cy="261" rx="6" ry="8" fill="#005a55" />
      <ellipse cx="206" cy="847" rx="6" ry="8" fill="#005a55" />
      <circle cx="498" cy="405" r="10" fill="#005a55" />
      <path d="m360 885 22-8 4 20-24 5z" fill="#005a55" />
      <path d="M488 642h18" stroke="#111" strokeWidth="10" />

      {/* spring clamps */}
      <path d="m395 255 150-42 20 60-120 30z" fill="#757978" />
      <path d="m500 350 70-25 26 35-86 28z" fill="#3f4846" />
      <path d="m390 345 45-15-10 45z" fill="#2c3b39" />
      <Screw x={432} y={255} r={14} />
      <Screw x={487} y={240} r={14} />
      <Spring x={512} y={266} angle={-12} />
      <Spring x={495} y={322} angle={-14} />
      <path d="m415 365 20-38" stroke="#a8796a" strokeWidth="10" />
      <Screw x={515} y={357} r={13} />
      <Screw x={567} y={347} r={14} />
      <path d="m480 865 170-62-6 18-150 56z" fill="#8f918f" />
      <Spring x={448} y={897} angle={-13} />
      <Spring x={548} y={868} angle={-14} />
      <Screw x={515} y={857} r={8} />
      <Screw x={570} y={845} r={8} />

      {/* body screws */}
      <Screw x={493} y={166} r={8} />
      <Screw x={638} y={123} r={8} />
      <Screw x={803} y={169} r={9} />
    </g>

    {/* view triad */}
    <g fontFamily="Open Sans, sans-serif" fontSize="9">
      <path d="M257 602V584" stroke="#2c7a2c" strokeWidth="3" />
      <path d="m252 586 5-10 5 10z" fill="#2c8a2c" />
      <path d="m257 602-10-3" stroke="#22269a" strokeWidth="3" />
      <path d="m238 595 9-2 3 6-4 2z" fill="#22269a" />
      <path d="m257 602-11 3" stroke="#b92a2a" strokeWidth="3" />
      <path d="m241 606 7-5 3 5-4 1z" fill="#b92a2a" />
      <text x="253" y="575" fill="#3f7d3f">Y</text>
      <text x="233" y="597" fill="#22269a">Z</text>
      <text x="235" y="608" fill="#b92a2a">X</text>
    </g>
  </svg>
);

/* ---------- data ---------- */

const menus = ['File', 'Edit', 'View', 'Insert', 'Tools', 'Window', 'Help'];

const commandTabs = [
  ['Assembly', 56],
  ['Layout', 45],
  ['Sketch', 46],
  ['Evaluate', 49],
  ['SOLIDWORKS Add-Ins', 108],
  ['MBD', 46],
  ['SOLIDWORKS CAM', 98],
];

// icon, label, has children
const treeItems = [
  ['history', 'History', true],
  ['sensors', 'Sensors', false],
  ['binder', 'Design Binder', true],
  ['annotations', 'Annotations', true],
  ['markups', 'Markups', false],
  ['plane', 'Plane1', false],
  ['plane', 'Plane2', false],
  ['plane', 'Plane3', false],
  ['origin', 'Origin', false],
  ['part', 'Camera Rear Cell<1> ->', true],
  ['part', '(-) Camera Element No1<1>', true],
  ['part', '(-) Camera Element No2<1>', true],
  ['part', '(-) Camera Element No3<1>', true],
  ['part', 'Fold Mirror No1<1>', true],
  ['part', 'Camera Baffle Front<1> ->', true],
  ['part', 'Fold Mirror No2<1>', true],
  ['part', 'Camera Counter Weight<1>', true],
  ['part', 'Camera Baffle Out<1>', true],
  ['part', 'Camera Baffle Rear<1> ->', true],
  ['part', 'Camera Baffle Inside<1>', true],
  ['part', 'Lens Mounting Tube<1>', true],
  ['part', 'Fold Mirror No2 Pre-Load<1>', true],
  ['part', 'Fold Mirror No1 Pre-Load<1>', true],
  ['part', 'Rear Mount Flange<1>', true],
];

// icon, label, width, width of the drop-down arrow after it
const quickTools = [
  ['home', 'Home', 22, 0],
  ['page', 'New', 20, 11],
  ['open', 'Open', 21, 11],
  ['save', 'Save', 21, 11],
  ['print', 'Print', 21, 11],
  ['undo', 'Undo', 21, 10],
];

const optionTools = [
  ['light', 'Rebuild', 21, 0],
  ['list', 'File Properties', 21, 0],
  ['gear', 'Options', 21, 11],
];

const hudTools = [
  ['zoomFit', 'Zoom to Fit', 21, 0],
  ['zoomArea', 'Zoom to Area', 21, 0],
  ['prevView', 'Previous View', 21, 0],
  ['section', 'Section View', 21, 0],
  ['dynView', 'Annotation Views', 21, 0],
  ['orient', 'View Orientation', 22, 10],
  ['cube', 'Display Style', 24, 8],
  ['eye', 'Hide/Show Items', 25, 9],
  ['appearance', 'Edit Appearance', 22, 0],
  ['scene', 'Apply Scene', 21, 10],
  ['monitor', 'View Settings', 23, 10],
];

const panelTabs = [
  ['assembly', 'FeatureManager'],
  ['list', 'PropertyManager'],
  ['tree', 'ConfigurationManager'],
  ['target', 'DimXpertManager'],
  ['ball', 'DisplayManager'],
];

const viewTabs = [
  ['Model', 48],
  ['3D Views', 54],
  ['Motion Study 1', 87],
];

const taskTabs = ['home', 'library', 'folder', 'palette', 'ball', 'props', 'forum'];

const Tools = ({ items, caretColor }) =>
  items.map(([icon, label, w, menu]) => (
    <React.Fragment key={icon}>
      <ToolButton $w={w} aria-label={label}>
        <Icon name={icon} />
      </ToolButton>
      {menu > 0 && (
        <ToolButton $w={menu} aria-label={`${label} options`}>
          <Caret $color={caretColor} />
        </ToolButton>
      )}
    </React.Fragment>
  ));

const App = () => {
  const [query, setQuery] = useState('boundi');
  const [treeFilter, setTreeFilter] = useState('');
  const [commandTab, setCommandTab] = useState('Assembly');
  const [panelTab, setPanelTab] = useState('assembly');
  const [viewTab, setViewTab] = useState('Model');

  return (
    <Shell>
      <GlobalStyle />
      <TitleBar>
        <Brand>
          <svg width="24" height="24" viewBox="0 0 24 24" aria-hidden="true">
            <g fill="none" stroke="#c5332b" strokeLinejoin="round">
              <path d="M4 2.500q7-1.500 7 .8T6 7.500" strokeWidth="1.800" />
              <path d="M6.500 9q5.500-.5 5 4T2 20.500L5.500 11" strokeWidth="1.800" />
              <path d="M22.500 8.500q-7-.5-7.500 2.500 0 1.500 3 3.500t.5 5q-2 2-7 1.500" strokeWidth="2.200" />
            </g>
          </svg>
          <BrandName><b>SOLID</b>WORKS</BrandName>
        </Brand>
        <MenuBar>
          {menus.map((m) => (
            <MenuItem key={m}>{m}</MenuItem>
          ))}
          <PinButton $w={20} aria-label="Pin menu">
            <Icon name="pin" size={14} />
          </PinButton>
        </MenuBar>
        <QuickTools>
          <Tools items={quickTools} />
          <ToolButton $w={22} $boxed="#b5b5b5" aria-label="Select">
            <Icon name="arrow" />
          </ToolButton>
          <ToolButton $w={11} $boxed="#f3f3f3" aria-label="Select options">
            <Caret />
          </ToolButton>
          <Tools items={optionTools} />
        </QuickTools>
        <DocTitle>Long Blue Camera *</DocTitle>
        <SearchBox>
          <Icon name="terminal" size={14} />
          <input aria-label="Search commands" value={query} onChange={(e) => setQuery(e.target.value)} />
          <Icon name="search" size={15} />
          <Caret />
        </SearchBox>
        <WindowTools>
          <ToolButton $w={22} aria-label="Log in"><Icon name="user" /></ToolButton>
          <ToolButton $w={20} aria-label="Help"><HelpMark>?</HelpMark></ToolButton>
          <ToolButton $w={11} aria-label="Help options"><Caret /></ToolButton>
          <ToolButton $w={21} aria-label="Minimize"><Icon name="minimize" /></ToolButton>
          <ToolButton $w={21} aria-label="Restore"><Icon name="restore" size={14} /></ToolButton>
          <ToolButton $w={20} aria-label="Close"><Icon name="close" /></ToolButton>
        </WindowTools>
      </TitleBar>

      <MacroBar>
        <MacroTools>
          <ToolButton aria-label="Run macro"><Icon name="play" size={14} /></ToolButton>
          <ToolButton aria-label="Stop macro"><Icon name="stop" size={14} /></ToolButton>
          <ToolButton aria-label="Record or pause macro"><Icon name="record" /></ToolButton>
          <ToolButton aria-label="New macro"><Icon name="macroNew" /></ToolButton>
          <ToolButton aria-label="Edit macro"><Icon name="macroEdit" /></ToolButton>
        </MacroTools>
      </MacroBar>

      <Ribbon>
        {ribbon.map((b) => (
          <RibbonButton key={b.text} $w={b.w} $menu={b.menu} $sep={b.sep} $active={b.active} disabled={b.disabled}>
            <Icon name={b.icon} />
            {b.text}
            {b.menu && <Caret />}
          </RibbonButton>
        ))}
      </Ribbon>

      <Workspace>
        <TopRow>
          <Tabs>
            {commandTabs.map(([name, w]) => (
              <Tab key={name} $w={w} $active={name === commandTab} onClick={() => setCommandTab(name)}>
                {name}
              </Tab>
            ))}
          </Tabs>
          <HudTools>
            <Tools items={hudTools} caretColor="#888" />
          </HudTools>
          <DocControls>
            <ToolButton $w={21} $color="#999" aria-label="Dock left"><Icon name="dockLeft" /></ToolButton>
            <ToolButton $w={22} $color="#999" aria-label="Dock right"><Icon name="dockRight" /></ToolButton>
            <ToolButton $w={21} $color="#999" aria-label="Minimize document"><Icon name="minimize" /></ToolButton>
            <ToolButton $w={21} $color="#999" aria-label="Restore document"><Icon name="restore" size={14} /></ToolButton>
            <ToolButton $w={22} $color="#999" aria-label="Close document"><Icon name="close" /></ToolButton>
          </DocControls>
        </TopRow>

        <Body>
          <Rail>
            <RailTools>
              <ToolButton aria-label="Assembly display"><Icon name="railA" /></ToolButton>
              <ToolButton aria-label="Path display"><Icon name="railB" /></ToolButton>
            </RailTools>
          </Rail>
          <Panel>
            <PanelGrip><Dot /></PanelGrip>
            <PanelTabs>
              {panelTabs.map(([icon, label]) => (
                <PanelTab key={icon} $active={icon === panelTab} aria-label={label} onClick={() => setPanelTab(icon)}>
                  <Icon name={icon} />
                </PanelTab>
              ))}
              <PanelArrows>
                <PanelArrow aria-label="Previous tab">◂</PanelArrow>
                <PanelArrow aria-label="Next tab">▸</PanelArrow>
              </PanelArrows>
            </PanelTabs>
            <FilterRow>
              <Icon name="funnel" size={15} />
              <Caret />
              <input aria-label="Filter tree" value={treeFilter} onChange={(e) => setTreeFilter(e.target.value)} />
            </FilterRow>
            <TreeArea>
              <Tree>
                <TreeItem $root>
                  <Icon name="assembly" size={15} />
                  {'Long Blue Camera  (Default)'}
                </TreeItem>
                {treeItems.map(([icon, label, open]) => (
                  <TreeItem key={label}>
                    <Expander $show={open} />
                    <Icon name={icon} size={15} />
                    {label}
                  </TreeItem>
                ))}
              </Tree>
              <ScrollTrack>
                <ScrollArrow $up />
                <ScrollThumb><ThumbGrip /></ScrollThumb>
                <ScrollArrow />
              </ScrollTrack>
            </TreeArea>
            <PanelHandle aria-label="Collapse panel"><Dot /></PanelHandle>
          </Panel>
          <Canvas>
            <Model />
            <TaskPane>
              {taskTabs.map((t) => (
                <TaskTab key={t} $active={t === 'home'} aria-label={t}>
                  <Icon name={t} />
                </TaskTab>
              ))}
            </TaskPane>
          </Canvas>
        </Body>
      </Workspace>

      <ViewTabs>
        {['|◂', '◂', '▸', '▸|'].map((s) => (
          <ViewNav key={s} disabled>{s}</ViewNav>
        ))}
        {viewTabs.map(([name, w]) => (
          <ViewTab key={name} $w={w} $active={name === viewTab} onClick={() => setViewTab(name)}>
            {name}
          </ViewTab>
        ))}
      </ViewTabs>

      <FilterBar>
        <ToolButton aria-label="Toggle filters"><Icon name="funnelGrey" /></ToolButton>
        <ToolButton aria-label="Clear filters"><Icon name="funnelsGrey" /></ToolButton>
        <ToolButton $w={23} aria-label="Select all filters"><Icon name="funnelsPurple" /></ToolButton>
        <ToolButton $w={24} $boxed="#b5b5b5" aria-label="Select"><Icon name="arrow" /></ToolButton>
        <ToolButton $w={10} $boxed="#f6f6f6" aria-label="Select options"><Caret /></ToolButton>
        <ToolButton aria-label="Inverse selection"><Icon name="selectGrey" /></ToolButton>
        <Divider />
        {filterGlyphs.map(([label, glyph, bold]) => (
          <ToolButton key={label} aria-label={label}>
            <svg width="20" height="16" viewBox="0 0 20 16" aria-hidden="true">
              {glyph}
              <path d="M10.500 8.500H18l-2.500 3v4l-2-1v-3z" fill={bold ? '#8f1fb0' : '#a468c0'} stroke="#f6f6f6" strokeWidth="0.5" />
            </svg>
          </ToolButton>
        ))}
        <Divider $tall />
      </FilterBar>

      <StatusBar>
        <StatusText>SOLIDWORKS Premium 2019 SP0.0</StatusText>
        <StatusCell>Under Defined</StatusCell>
        <StatusCell>Editing Assembly</StatusCell>
        <Units>
          MMGS
          <Caret />
        </Units>
        <Icon name="tags" size={14} />
      </StatusBar>
    </Shell>
  );
};

export default App;
